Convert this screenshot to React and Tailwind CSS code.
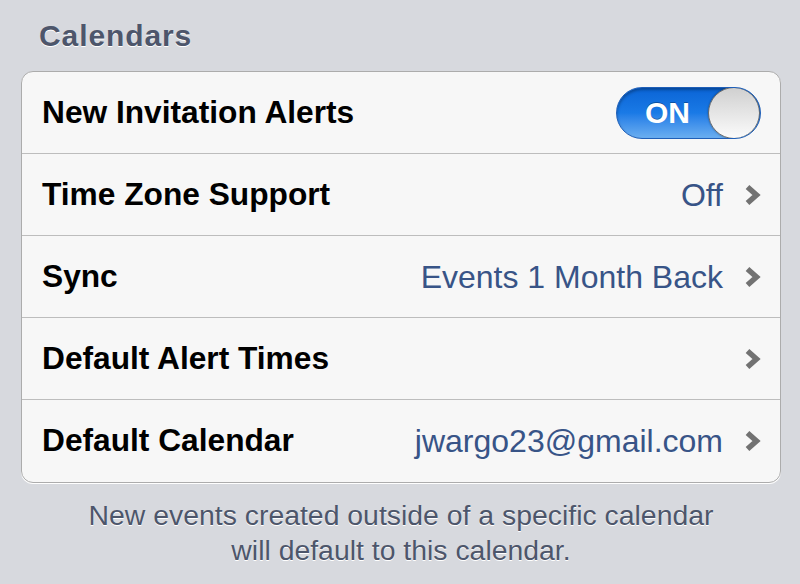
const rows = [
  { label: "Time Zone Support", value: "Off" },
  { label: "Sync", value: "Events 1 Month Back" },
  { label: "Default Alert Times", value: "" },
  { label: "Default Calendar", value: "jwargo23@gmail.com" },
];

const Chevron = () => (
  <svg width="17" height="22" viewBox="0 0 17 22" className="ml-[21px] shrink-0">
    <path d="M3.5 3 L12.5 11 L3.5 19" fill="none" stroke="#727272" strokeWidth="5.5" strokeLinejoin="miter" />
  </svg>
);

const Toggle = () => (
  <div className="relative flex h-[52px] w-[145px] items-center overflow-hidden rounded-full border border-[#1f5fb8] bg-gradient-to-b from-[#0a64d6] via-[#1a7ae6] to-[#6aaef0] shadow-[inset_0_2px_3px_rgba(0,0,0,0.3)]">
    <span className="pl-[28px] text-[30px] font-bold text-white [text-shadow:0_-1px_0_rgba(0,0,0,0.3)]">
      ON
    </span>
    <div className="absolute right-0 top-[-1px] h-[52px] w-[52px] rounded-full border border-[#6b6b6b] bg-gradient-to-b from-[#d0d0d0] to-[#fbfbfb] shadow-[0_0_2px_rgba(0,0,0,0.4)]" />
  </div>
);

export default function App() {
  return (
    <div
      className="h-[584px] w-[800px] overflow-hidden bg-[#d7d9de] pl-[21px] pr-[19px] pt-[19px]"
      style={{ fontFamily: '"Liberation Sans", Arial, sans-serif' }}
    >
      <h2 className="pl-[18px] text-[30px] font-bold leading-[34px] tracking-[0.9px] text-[#4d566b] [text-shadow:0_1px_0_#ffffff]">
        Calendars
      </h2>
      <div className="mt-[18px] overflow-hidden rounded-[12px] border border-[#acacac] bg-[#f7f7f7] shadow-[0_1px_0_#ffffff]">
        <div className="flex h-[82px] items-center justify-between border-b border-[#bdbdbd] pl-[20px] pr-[19px]">
          <span className="text-[31.7px] font-bold text-black">New Invitation Alerts</span>
          <Toggle />
        </div>
        {rows.map((r, i) => (
          <div
            key={r.label}
            className={`flex h-[82px] items-center pl-[20px] pr-[19px] ${
              i < rows.length - 1 ? "border-b border-[#bdbdbd]" : ""
            }`}
          >
            <span className="text-[31.7px] font-bold text-black">{r.label}</span>
            <span className="ml-auto text-[32px] text-[#385487]">{r.value}</span>
            <Chevron />
          </div>
        ))}
      </div>
      <p className="mt-[15px] text-center text-[28.4px] leading-[35px] text-[#4d566b] [text-shadow:0_1px_0_#ffffff]">
        New events created outside of a specific calendar
        <br />
        will default to this calendar.
      </p>
    </div>
  );
}
